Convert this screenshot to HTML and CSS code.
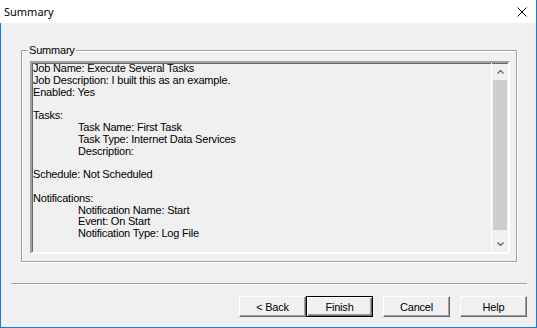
FILE: index.html
```html
<!DOCTYPE html>
<html lang="en">
<head>
    <meta charset="UTF-8">
    <title>Summary</title>
    <link rel="stylesheet" href="styles.css">
</head>
<body>
    <div class="window">
        <div class="titlebar">
            <span class="title">Summary</span>
            <button class="close-btn" aria-label="Close">
                <svg width="10" height="10" viewBox="0 0 10 10">
                    <path d="M0.5 0.5 L9.5 9.5 M9.5 0.5 L0.5 9.5" stroke="#000" stroke-width="1" fill="none"/>
                </svg>
            </button>
        </div>

        <div class="dialog">
            <!-- Summary group -->
            <fieldset class="group">
                <legend>Summary</legend>
                <div class="textbox">
                    <div class="text-content">
                        <div class="section">
                            <div>Job Name: Execute Several Tasks</div>
                            <div>Job Description: I built this as an example.</div>
                            <div>Enabled: Yes</div>
                        </div>
                        <div class="section">
                            <div>Tasks:</div>
                            <div class="indent">Task Name: First Task</div>
                            <div class="indent">Task Type: Internet Data Services</div>
                            <div class="indent">Description:</div>
                        </div>
                        <div class="section">
                            <div>Schedule: Not Scheduled</div>
                        </div>
                        <div class="section">
                            <div>Notifications:</div>
                            <div class="indent">Notification Name: Start</div>
                            <div class="indent">Event: On Start</div>
                            <div class="indent">Notification Type: Log File</div>
                        </div>
                    </div>
                    <div class="scrollbar">
                        <div class="scroll-arrow">
                            <svg width="7" height="4" viewBox="0 0 7 4">
                                <path d="M0.5 3.5 L3.5 0.5 L6.5 3.5" stroke="#606060" stroke-width="1.2" fill="none"/>
                            </svg>
                        </div>
                        <div class="scroll-track">
                            <div class="scroll-thumb"></div>
                        </div>
                        <div class="scroll-arrow">
                            <svg width="7" height="4" viewBox="0 0 7 4">
                                <path d="M0.5 0.5 L3.5 3.5 L6.5 0.5" stroke="#606060" stroke-width="1.2" fill="none"/>
                            </svg>
                        </div>
                    </div>
                </div>
            </fieldset>

            <div class="separator"></div>

            <div class="buttons">
                <button class="btn">&lt; Back</button>
                <button class="btn btn-default">Finish</button>
                <button class="btn btn-gap">Cancel</button>
                <button class="btn btn-gap">Help</button>
            </div>
        </div>
    </div>
</body>
</html>
```

FILE: styles.css
```css
:root {
    --face-color: #f0f0f0;
    --shadow-color: #a0a0a0;
    --dark-shadow: #696969;
    --accent-color: #1a7bd6;
    --text-color: #000;
}

* {
    margin: 0;
    padding: 0;
    box-sizing: border-box;
}

body {
    width: 537px;
    height: 328px;
    overflow: hidden;
    font-family: "Liberation Sans", Arial, sans-serif;
    font-size: 11px;
    letter-spacing: -0.2px;
    color: var(--text-color);
}

.window {
    width: 537px;
    height: 328px;
    display: flex;
    flex-direction: column;
    background-color: var(--face-color);
    border-right: 1px solid var(--accent-color);
    border-bottom: 1px solid var(--accent-color);
}

.titlebar {
    height: 23px;
    background-color: #fff;
    display: flex;
    align-items: center;
    justify-content: space-between;
    padding-left: 4px;
}

.title {
    font-family: "Noto Sans", sans-serif;
    font-size: 11px;
    letter-spacing: 0;
    line-height: 16px;
}

.close-btn {
    width: 10px;
    height: 10px;
    margin-right: 9px;
    background: none;
    border: none;
    display: flex;
}

.dialog {
    flex: 1;
    border-left: 1px solid var(--accent-color);
    padding-top: 21px;
}

/* etched group box */
.group {
    margin: 0 19px 0 20px;
    border: 1px solid var(--shadow-color);
    box-shadow: inset 1px 1px 0 #fff, 1px 1px 0 #fff;
    padding: 4px 6px 7px 8px;
}

.group legend {
    margin-left: -2px;
    padding: 0 1px;
    line-height: 13px;
    background-color: var(--face-color);
}

/* sunken read-only edit */
.textbox {
    height: 193px;
    display: flex;
    border: 2px solid;
    border-color: var(--shadow-color) #fff #fff var(--shadow-color);
    box-shadow: inset 1px 1px 0 var(--dark-shadow);
    background-color: var(--face-color);
}

.text-content {
    flex: 1;
    padding: 0 0 0 1px;
    line-height: 11.8px;
    white-space: nowrap;
    overflow: hidden;
}

.section {
    margin-bottom: 11.8px;
}

.indent {
    padding-left: 45px;
}

.scrollbar {
    width: 17px;
    display: flex;
    flex-direction: column;
    border-left: 1px solid #fff;
}

.scroll-arrow {
    height: 17px;
    display: flex;
    align-items: center;
    justify-content: center;
}

.scroll-track {
    flex: 1;
    padding: 0 1px;
}

.scroll-thumb {
    height: 150px;
    background-color: #cdcdcd;
}

.separator {
    height: 2px;
    margin: 21px 9px 0 10px;
    border-top: 1px solid var(--shadow-color);
    border-bottom: 1px solid #fff;
}

.buttons {
    display: flex;
    justify-content: flex-end;
    padding: 11px 9px 0 0;
}

.btn {
    width: 67px;
    height: 21px;
    font-family: "Liberation Sans", Arial, sans-serif;
    font-size: 11px;
    letter-spacing: -0.2px;
    color: var(--text-color);
    background-color: var(--face-color);
    border: 1px solid;
    border-color: #fff var(--dark-shadow) var(--dark-shadow) #fff;
    box-shadow: inset -1px -1px 0 var(--shadow-color);
}

.btn-default {
    border-color: #000;
    box-shadow: inset 1px 1px 0 #fff, inset -1px -1px 0 var(--dark-shadow), inset -2px -2px 0 var(--shadow-color);
}

.btn-gap {
    margin-left: 10px;
}
```
